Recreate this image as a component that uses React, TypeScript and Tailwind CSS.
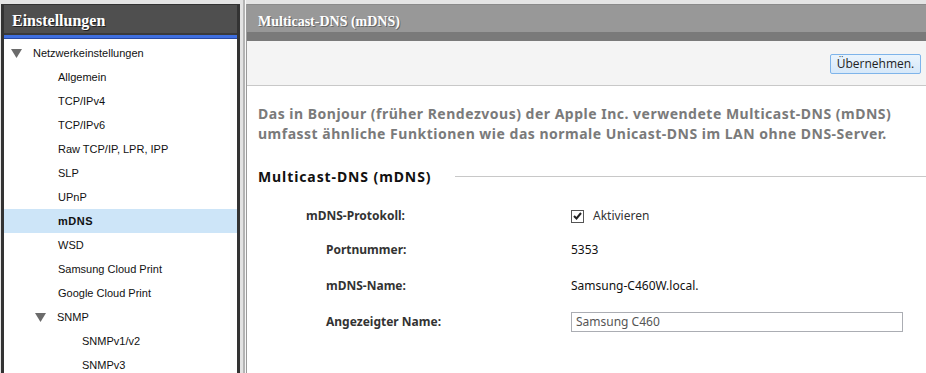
import React from "react";

const tri = (
  <svg width="11" height="9" viewBox="0 0 11 9">
    <path d="M0 0 H11 L5.5 9 Z" fill="#6b6b6b" />
  </svg>
);

type Item = { label: string; level: number; expand?: boolean; active?: boolean };

const items: Item[] = [
  { label: "Netzwerkeinstellungen", level: 0, expand: true },
  { label: "Allgemein", level: 1 },
  { label: "TCP/IPv4", level: 1 },
  { label: "TCP/IPv6", level: 1 },
  { label: "Raw TCP/IP, LPR, IPP", level: 1 },
  { label: "SLP", level: 1 },
  { label: "UPnP", level: 1 },
  { label: "mDNS", level: 1, active: true },
  { label: "WSD", level: 1 },
  { label: "Samsung Cloud Print", level: 1 },
  { label: "Google Cloud Print", level: 1 },
  { label: "SNMP", level: 1, expand: true },
  { label: "SNMPv1/v2", level: 2 },
  { label: "SNMPv3", level: 2 },
];

export default function App() {
  return (
    <div
      className="w-[926px] h-[373px] overflow-hidden bg-[#e4e4e4] flex pt-[4px] pl-[1px]"
      style={{ fontFamily: "'Liberation Sans', Arial, sans-serif" }}
    >
      {/* Left panel */}
      <div className="w-[239px] shrink-0 flex flex-col border-x-[3px] border-t border-[#333]">
        <div
          className="h-[28px] shrink-0 bg-[#4f4f4f] flex items-center pl-[8px] pt-[3px] text-white font-bold text-[16px]"
          style={{ fontFamily: "'Liberation Serif', 'Times New Roman', serif", textShadow: "1px 1px 0 #222" }}
        >
          Einstellungen
        </div>
        <div className="h-[2px] shrink-0 bg-[#3a3a3a]" />
        <div className="h-[4px] shrink-0 bg-[#3f6fe0] border-b border-[#2a4aa0]" />
        <div className="bg-white flex-1 pt-[2px]">
          {items.map((it) => (
            <div
              key={it.label}
              className={`h-[24px] shrink-0 flex items-center text-[11px] text-[#111] ${it.active ? "bg-[#cde5f8] font-bold tracking-[0.5px]" : ""}`}
            >
              <div
                className="flex items-center"
                style={{ paddingLeft: it.level === 0 ? 7 : it.level === 1 ? (it.expand ? 31 : 54) : 78 }}
              >
                {it.expand && <span className="w-[22px] flex">{tri}</span>}
                <span>{it.label}</span>
              </div>
            </div>
          ))}
        </div>
      </div>

      {/* Splitter */}
      <div className="w-[6px] shrink-0 flex mt-[-4px]">
        <div className="w-[3px] bg-[#e2e2e2]" />
        <div className="w-[2px] bg-[#b4b4b4]" />
        <div className="w-[1px] bg-[#f8f8f8]" />
      </div>

      {/* Right panel */}
      <div className="flex-1 flex flex-col border-l border-[#9a9a9a] bg-white">
        <div
          className="h-[28px] shrink-0 bg-[#989898] border-t border-[#8a8a8a] flex items-center pl-[11px] pt-[6px] text-white font-bold text-[14px]"
          style={{ fontFamily: "'Liberation Serif', 'Times New Roman', serif", textShadow: "1px 1px 0 #666" }}
        >
          Multicast-DNS (mDNS)
        </div>
        <div className="h-[9px] shrink-0 bg-[#7a7a7a]" />
        <div className="h-[45px] shrink-0 bg-[#f4f4f4] border-b border-[#c8c8c8] flex items-center justify-end pr-[5px]">
          <button
            className="h-[20px] w-[91px] rounded-[2px] border border-[#7eb4ea] text-[12px] text-[#222] mt-[1px]"
            style={{
              background: "linear-gradient(#eaf4fd, #d6e8f9)",
              fontFamily: "'Open Sans', 'Noto Sans', sans-serif",
            }}
          >
            Übernehmen.
          </button>
        </div>
        <div className="px-[11px] pt-[18px]" style={{ fontFamily: "'Noto Sans', 'Open Sans', sans-serif" }}>
          <div className="text-[14px] font-bold text-[#7a7a7a] leading-[20px] tracking-[0.5px]">
            Das in Bonjour (früher Rendezvous) der Apple Inc. verwendete Multicast-DNS (mDNS)
            <br />
            umfasst ähnliche Funktionen wie das normale Unicast-DNS im LAN ohne DNS-Server.
          </div>
          <div className="flex items-center mt-[22px] h-[20px]">
            <span className="text-[14px] font-bold text-[#111] tracking-[0.9px]">Multicast-DNS (mDNS)</span>
            <div className="flex-1 h-px bg-[#c8c8c8] ml-[24px] mr-[-11px]" />
          </div>
          <div className="mt-[19px] text-[12px] text-[#111]">
            <div className="flex items-center h-[22px]">
              <div className="w-[313px] pl-[48px] font-bold text-[#333]">mDNS-Protokoll:</div>
              <div className="flex items-center">
                <span className="w-[13px] h-[13px] border border-[#555] bg-white flex items-center justify-center">
                  <svg width="9" height="8" viewBox="0 0 9 8">
                    <path d="M1 4 L3.5 6.5 L8 1" stroke="#222" strokeWidth="2" fill="none" />
                  </svg>
                </span>
                <span className="ml-[9px] text-[#333]">Aktivieren</span>
              </div>
            </div>
            <div className="flex items-center h-[22px] mt-[12px]">
              <div className="w-[313px] pl-[68px] font-bold text-[#333]">Portnummer:</div>
              <div>5353</div>
            </div>
            <div className="flex items-center h-[22px] mt-[14px]">
              <div className="w-[313px] pl-[68px] font-bold text-[#333]">mDNS-Name:</div>
              <div>Samsung-C460W.local.</div>
            </div>
            <div className="flex items-center h-[22px] mt-[14px]">
              <div className="w-[313px] pl-[68px] font-bold text-[#333]">Angezeigter Name:</div>
              <div className="w-[332px] h-[20px] border border-[#abadb3] flex items-center pl-[4px] text-[#555]">
                Samsung C460
              </div>
            </div>
          </div>
        </div>
      </div>
    </div>
  );
}
